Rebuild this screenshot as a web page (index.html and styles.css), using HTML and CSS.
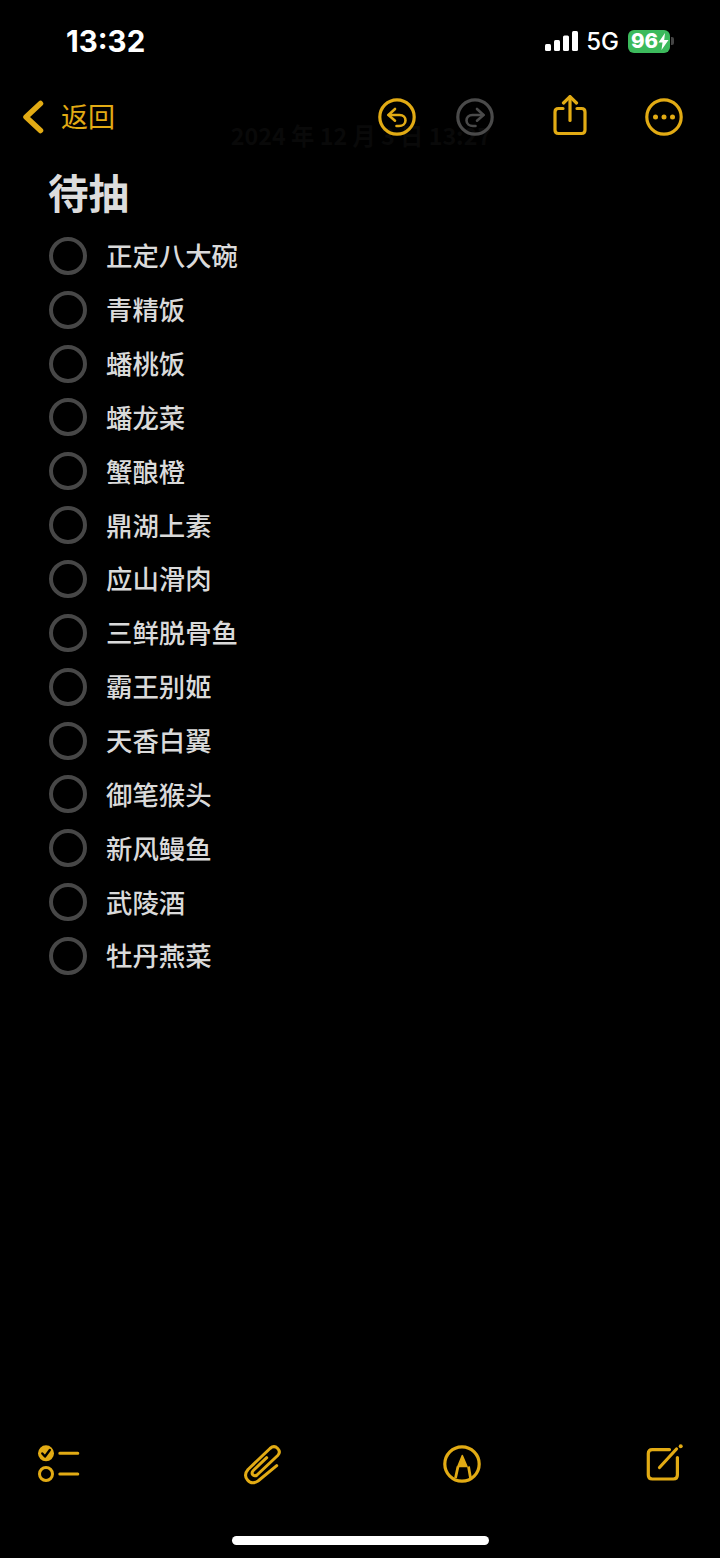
FILE: index.html
```html
<!DOCTYPE html>
<html lang="zh">
<head>
  <meta charset="UTF-8" />
  <meta name="viewport" content="width=device-width, initial-scale=1.0"/>
  <title>待抽</title>
  <link rel="stylesheet" href="styles.css">
</head>
<body>
  <div class="screen">

    <!-- Status bar -->
    <div class="status-bar">
      <div class="time">13:32</div>
      <div class="status-right">
        <svg class="signal" width="33" height="22" viewBox="0 0 33 22">
          <rect x="0" y="14" width="6" height="7" rx="1.5" fill="#fff"/>
          <rect x="9" y="10" width="6" height="11" rx="1.5" fill="#fff"/>
          <rect x="18" y="5.500" width="6" height="15.500" rx="1.5" fill="#fff"/>
          <rect x="27" y="1" width="6" height="20" rx="1.5" fill="#fff"/>
        </svg>
        <span class="network">5G</span>
        <div class="battery">
          <span class="battery-num">96</span>
          <svg width="11" height="17" viewBox="0 0 11 17"><path d="M7 0 L0.500 9.500 H4.500 L3.500 17 L10.500 7 H6.200 Z" fill="#fff"/></svg>
        </div>
        <div class="battery-cap"></div>
      </div>
    </div>

    <!-- Top nav -->
    <div class="nav">
      <svg class="chevron" width="22" height="34" viewBox="0 0 22 34">
        <path d="M18.500 3.500 L4 17 L18.500 30.500" fill="none" stroke="#e2ab14" stroke-width="5.500" stroke-linecap="round" stroke-linejoin="round"/>
      </svg>
      <span class="back-label">返回</span>
      <div class="nav-icons">
        <svg class="icon" width="40" height="40" viewBox="0 0 40 40" fill="none" stroke="#e2ab14" stroke-width="3.200" stroke-linecap="round" stroke-linejoin="round">
          <circle cx="20" cy="20" r="17.200"/>
          <path d="M18 12 L11.500 18 L18 23.700" stroke-width="2.600"/>
          <path d="M11.500 18 H22.500 C26.500 18 28.500 20.500 28.500 23.500 C28.500 26.800 25.500 29 22 29 H19.500" stroke-width="2.600"/>
        </svg>
        <svg class="icon redo" width="40" height="40" viewBox="0 0 40 40" fill="none" stroke="#4a4a4a" stroke-width="3.200" stroke-linecap="round" stroke-linejoin="round">
          <circle cx="20" cy="20" r="17.200"/>
          <path d="M22 12 L28.500 18 L22 23.700" stroke-width="2.600"/>
          <path d="M28.500 18 H17.500 C13.500 18 11.500 20.500 11.500 23.500 C11.500 26.800 14.500 29 18 29 H20.500" stroke-width="2.600"/>
        </svg>
        <svg class="icon share" width="40" height="42" viewBox="0 0 40 42" fill="none" stroke="#e2ab14" stroke-width="3.200" stroke-linecap="round" stroke-linejoin="round">
          <path d="M13 13.500 H8.500 C6 13.500 5 14.500 5 17 V35 C5 37.500 6 38.500 8.500 38.500 H31.500 C34 38.500 35 37.500 35 35 V17 C35 14.500 34 13.500 31.500 13.500 H27"/>
          <path d="M20 25.500 V1.800"/>
          <path d="M13.500 8 L20 1.600 L26.500 8"/>
        </svg>
        <svg class="icon more" width="40" height="40" viewBox="0 0 40 40">
          <circle cx="20" cy="20" r="17.200" fill="none" stroke="#e2ab14" stroke-width="3.200"/>
          <circle cx="11.500" cy="20" r="2.500" fill="#e2ab14"/>
          <circle cx="20" cy="20" r="2.500" fill="#e2ab14"/>
          <circle cx="28.500" cy="20" r="2.500" fill="#e2ab14"/>
        </svg>
      </div>
    </div>

    <!-- Note body -->
    <div class="note">
      <div class="note-date">2024 年 12 月 3 日 13:27</div>
      <h1 class="note-title">待抽</h1>
      <ul class="checklist">
        <li class="check-row"><span class="check-circle"></span><span class="check-text">正定八大碗</span></li>
        <li class="check-row"><span class="check-circle"></span><span class="check-text">青精饭</span></li>
        <li class="check-row"><span class="check-circle"></span><span class="check-text">蟠桃饭</span></li>
        <li class="check-row"><span class="check-circle"></span><span class="check-text">蟠龙菜</span></li>
        <li class="check-row"><span class="check-circle"></span><span class="check-text">蟹酿橙</span></li>
        <li class="check-row"><span class="check-circle"></span><span class="check-text">鼎湖上素</span></li>
        <li class="check-row"><span class="check-circle"></span><span class="check-text">应山滑肉</span></li>
        <li class="check-row"><span class="check-circle"></span><span class="check-text">三鲜脱骨鱼</span></li>
        <li class="check-row"><span class="check-circle"></span><span class="check-text">霸王别姬</span></li>
        <li class="check-row"><span class="check-circle"></span><span class="check-text">天香白翼</span></li>
        <li class="check-row"><span class="check-circle"></span><span class="check-text">御笔猴头</span></li>
        <li class="check-row"><span class="check-circle"></span><span class="check-text">新风鳗鱼</span></li>
        <li class="check-row"><span class="check-circle"></span><span class="check-text">武陵酒</span></li>
        <li class="check-row"><span class="check-circle"></span><span class="check-text">牡丹燕菜</span></li>
      </ul>
    </div>

    <!-- Bottom toolbar -->
    <div class="toolbar">
      <svg class="tool" width="44" height="40" viewBox="0 0 44 40" fill="none" stroke="#e2ab14" stroke-linecap="round">
        <circle cx="9" cy="9.300" r="8" fill="#e2ab14" stroke="none"/>
        <path d="M5.300 9.500 L8 12.500 L12.800 6" stroke="#000" stroke-width="2.400" stroke-linejoin="round"/>
        <circle cx="9" cy="30" r="6.500" stroke-width="3"/>
        <path d="M22.800 9.300 H40.800 M22.800 30 H40.800" stroke-width="3"/>
      </svg>
      <svg class="tool tool-clip" width="44" height="44" viewBox="0 0 44 44" fill="none" stroke="#e2ab14" stroke-width="3" stroke-linecap="round" stroke-linejoin="round">
        <path d="M36.700 23.700 L18 39 C14 41.500 10 41 7.500 38 C5 35 5 31 8 27.500 L30 6.500 C32.500 4.300 35.500 4.300 37.700 6.500 C39.700 8.700 39.700 11.500 37.700 13.500 L17 33 C15.500 34.300 13.800 34 12.800 32.800 C11.800 31.500 12 29.800 13.300 28.500 L26.700 15.700"/>
      </svg>
      <svg class="tool tool-markup" width="40" height="40" viewBox="0 0 40 40" fill="none" stroke="#e2ab14" stroke-width="3.200" stroke-linejoin="round">
        <circle cx="20" cy="20" r="17.200"/>
        <path d="M13.500 34 L16 22.500 M26.500 22.500 L28.500 34" stroke-width="2.800"/>
        <path d="M15.800 22.500 H25 L20.300 11.500 Z" fill="#e2ab14" stroke-width="1.500"/>
      </svg>
      <svg class="tool tool-compose" width="40" height="40" viewBox="0 0 40 40" fill="none" stroke="#e2ab14" stroke-width="3.200" stroke-linecap="round" stroke-linejoin="round">
        <path d="M25.500 5.600 H8.300 C5.500 5.600 4.300 6.800 4.300 9.600 V31 C4.300 33.800 5.500 35 8.300 35 H29.400 C32.200 35 33.400 33.800 33.400 31 V13.500"/>
        <path d="M15.500 23.500 L32.500 5"/>
        <circle cx="36.700" cy="2.300" r="2" fill="#e2ab14" stroke="none"/>
      </svg>
    </div>

    <div class="home-bar"></div>
  </div>
</body>
</html>
```

FILE: styles.css
```css
/* Basic Reset */
* {
  box-sizing: border-box;
  margin: 0;
  padding: 0;
}

body {
  background: #000;
  font-family: "Noto Sans CJK SC", "Noto Sans", sans-serif;
}

.screen {
  width: 720px;
  height: 1558px;
  display: flex;
  flex-direction: column;
  overflow: hidden;
  background: #000;
}

/* Status Bar */
.status-bar {
  height: 82px;
  display: flex;
  justify-content: space-between;
  align-items: center;
  padding: 0 46px 0 66px;
}

.time {
  font-family: Inter, sans-serif;
  font-size: 29.500px;
  font-weight: 700;
  color: #fff;
}

.status-right {
  display: flex;
  align-items: center;
}

.signal {
  margin-right: -1px;
}

.network {
  font-family: Inter, sans-serif;
  font-size: 24px;
  font-weight: 500;
  color: #fff;
  margin-left: 9px;
}

.battery {
  width: 42px;
  height: 23px;
  margin-left: 9px;
  background: #3cba5c;
  border-radius: 6px;
  display: flex;
  align-items: center;
  padding-left: 3px;
}

.battery-num {
  font-family: Inter, sans-serif;
  font-size: 20.500px;
  font-weight: 800;
  color: #fff;
  line-height: 22px;
}

.battery-cap {
  width: 3px;
  height: 8px;
  margin-left: 1px;
  background: #444;
  border-radius: 0 2px 2px 0;
}

/* Top Nav */
.nav {
  height: 70px;
  display: flex;
  align-items: center;
  padding: 0 36px 0 22px;
  position: relative;
  z-index: 1;
}

.back-label {
  font-size: 27px;
  color: #e2ab14;
  margin-left: 17px;
  margin-bottom: 4px;
}

.nav-icons {
  margin-left: auto;
  display: flex;
  align-items: center;
}

.redo {
  margin-left: 38px;
}

.share {
  margin-left: 55px;
  margin-top: -2px;
}

.more {
  margin-left: 54px;
}

/* Note */
.note {
  flex: 1;
  padding: 15px 0 0 48px;
}

/* scrolled date, nearly hidden behind the nav */
.note-date {
  margin: -46px 0 18px;
  padding-right: 46px;
  line-height: 28px;
  font-size: 23.300px;
  font-weight: 700;
  text-align: center;
  color: #090909;
}

.note-title {
  font-size: 40.500px;
  font-weight: 700;
  line-height: 50px;
  color: #dcdcdc;
  margin-bottom: 12px;
}

.checklist {
  list-style: none;
}

.check-row {
  height: 53.850px;
  display: flex;
  align-items: center;
  font-size: 26.400px;
  font-weight: 500;
  color: #dadada;
}

.check-circle {
  width: 38px;
  height: 38px;
  margin-left: 1px;
  margin-right: 19px;
  border: 4px solid #474747;
  border-radius: 50%;
}

.check-text {
  margin-bottom: 2px;
}

/* Bottom Toolbar */
.toolbar {
  height: 60px;
  display: flex;
  align-items: center;
  padding-left: 37px;
  margin-bottom: 42px;
}

.tool-clip {
  margin-left: 159px;
}

.tool-markup {
  margin-left: 158px;
}

.tool-compose {
  margin-left: 162px;
}

.home-bar {
  width: 257px;
  height: 9px;
  margin: 0 auto 13px;
  background: #fff;
  border-radius: 5px;
}
```
